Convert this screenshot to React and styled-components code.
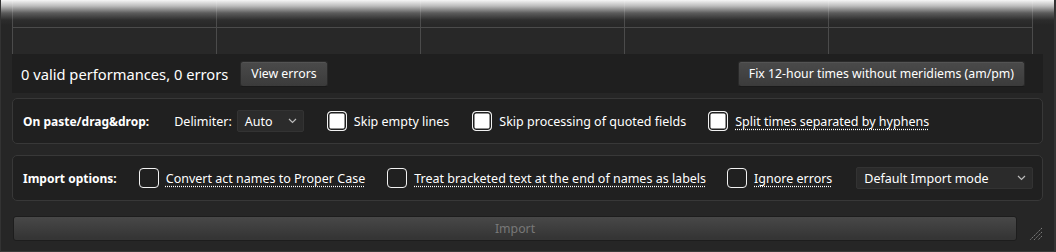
import React from "react";
import styled, { createGlobalStyle } from "styled-components";

const GlobalStyle = createGlobalStyle`
  html, body {
    margin: 0;
    padding: 0;
    background: #262626;
  }
  body {
    font-family: "Noto Sans", "Open Sans", sans-serif;
    color: #fff;
  }
`;

const Window = styled.div`
  position: relative;
  box-sizing: border-box;
  width: 1056px;
  height: 252px;
  padding: 0 11px 0 11px;
  background: #262626;
  border-left: 1px solid #333;
  border-right: 2px solid #333;
  border-bottom: 1px solid #3a3a3a;
  display: flex;
  flex-direction: column;
  overflow: hidden;

  /* the white fade that sits over the top of the grid */
  &::before {
    content: "";
    position: absolute;
    top: 0;
    left: 0;
    right: 0;
    height: 26px;
    pointer-events: none;
    background: linear-gradient(
      to bottom,
      rgba(250, 250, 250, 0.98) 0px,
      rgba(225, 225, 225, 0.8) 6px,
      rgba(170, 170, 170, 0.4) 13px,
      rgba(90, 90, 90, 0.12) 20px,
      rgba(0, 0, 0, 0) 25px
    );
  }
`;

const Grid = styled.div`
  display: grid;
  grid-template-columns: repeat(5, 1fr);
  grid-template-rows: 28px 26px;
  width: 1020px;
  border-left: 1px solid #4b4b4b;
  background: #282828;
`;

const Cell = styled.div`
  border-right: 1px solid #4b4b4b;
  border-bottom: ${(p) => (p.$head ? "1px solid #4b4b4b" : "none")};
`;

const StatusBar = styled.div`
  display: flex;
  align-items: center;
  height: 39px;
  padding: 0 18px 0 9px;
  background: #1f1f1f;
`;

const StatusText = styled.span`
  font-size: 14.7px;
  color: #fff;
  margin-right: 12px;
  white-space: nowrap;
`;

const Button = styled.button`
  height: 26px;
  padding: 0 10px;
  font-family: "Noto Sans", "Open Sans", sans-serif;
  font-size: 12.3px;
  color: #fff;
  white-space: nowrap;
  background: linear-gradient(to bottom, #4a4a4a, #3b3b3b);
  border: 1px solid #2a2a2a;
  border-bottom-color: #1a1a1a;
  border-radius: 3px;
  box-shadow: inset 0 1px 0 rgba(255, 255, 255, 0.06);
  margin-left: ${(p) => (p.$push ? "auto" : "0")};
`;

const Panel = styled.div`
  display: flex;
  align-items: center;
  height: 44px;
  margin-top: ${(p) => p.$gap}px;
  padding: 0 10px;
  background: #202020;
  border: 1px solid #383838;
  border-radius: 5px;
  white-space: nowrap;
`;

const PanelTitle = styled.span`
  font-size: 12px;
  font-weight: 700;
  margin-right: ${(p) => p.$space}px;
`;

const FieldLabel = styled.span`
  font-size: 12.5px;
  margin-right: 5px;
`;

const Dropdown = styled.div`
  display: flex;
  align-items: center;
  justify-content: space-between;
  flex-shrink: 0;
  box-sizing: border-box;
  width: ${(p) => p.$width}px;
  height: 22px;
  padding: 0 6px 0 7px;
  font-size: 12.5px;
  background: #2b2b2b;
  border: 1px solid #333;
  border-radius: 2px;
  margin-left: ${(p) => p.$left || 0}px;
`;

const Option = styled.label`
  display: flex;
  align-items: center;
  flex-shrink: 0;
  gap: 7px;
  font-size: 12.5px;
  margin-left: ${(p) => p.$left}px;
`;

const Box = styled.span`
  box-sizing: border-box;
  width: 20px;
  height: 20px;
  border: 1.5px solid #f2f2f2;
  border-radius: 4px;
  background: ${(p) => (p.$filled ? "#fff" : "transparent")};
  box-shadow: ${(p) => (p.$filled ? "inset 0 0 0 1.5px #202020" : "none")};
`;

const OptionText = styled.span`
  text-decoration: ${(p) => (p.$hint ? "underline dotted" : "none")};
  text-underline-offset: 3px;
`;

const Footer = styled.div`
  display: flex;
  align-items: flex-start;
  margin-top: 15px;
`;

const ImportButton = styled.button`
  width: 1008px;
  height: 25px;
  margin-left: 1px;
  font-family: "Noto Sans", "Open Sans", sans-serif;
  font-size: 12.3px;
  color: #787878;
  background: linear-gradient(to bottom, #484848, #353535 90%);
  border: 1px solid #1d1d1d;
  border-radius: 3px;
`;

const Grip = styled.svg`
  margin: 9px 0 0 10px;
`;

const Chevron = () => (
  <svg width="9" height="6" viewBox="0 0 9 6">
    <polyline points="1,1 4.5,4.5 8,1" fill="none" stroke="#bbb" strokeWidth="1.2" />
  </svg>
);

export default function App() {
  return (
    <>
      <GlobalStyle />
      <Window>
        <Grid>
          {[0, 1, 2, 3, 4].map((i) => (
            <Cell key={"h" + i} $head />
          ))}
          {[0, 1, 2, 3, 4].map((i) => (
            <Cell key={"r" + i} />
          ))}
        </Grid>

        <StatusBar>
          <StatusText>0 valid performances, 0 errors</StatusText>
          <Button>View errors</Button>
          <Button $push>Fix 12-hour times without meridiems (am/pm)</Button>
        </StatusBar>

        <Panel $gap={5}>
          <PanelTitle $space={25}>On paste/drag&amp;drop:</PanelTitle>
          <FieldLabel>Delimiter:</FieldLabel>
          <Dropdown $width={67}>
            Auto
            <Chevron />
          </Dropdown>
          <Option $left={23}>
            <Box $filled />
            <OptionText>Skip empty lines</OptionText>
          </Option>
          <Option $left={23}>
            <Box $filled />
            <OptionText>Skip processing of quoted fields</OptionText>
          </Option>
          <Option $left={22}>
            <Box $filled />
            <OptionText $hint>Split times separated by hyphens</OptionText>
          </Option>
        </Panel>

        <Panel $gap={11}>
          <PanelTitle $space={22}>Import options:</PanelTitle>
          <Option $left={0}>
            <Box />
            <OptionText $hint>Convert act names to Proper Case</OptionText>
          </Option>
          <Option $left={22}>
            <Box />
            <OptionText $hint>Treat bracketed text at the end of names as labels</OptionText>
          </Option>
          <Option $left={21}>
            <Box />
            <OptionText $hint>Ignore errors</OptionText>
          </Option>
          <Dropdown $width={177} $left={24}>
            Default Import mode
            <Chevron />
          </Dropdown>
        </Panel>

        <Footer>
          <ImportButton>Import</ImportButton>
          <Grip width="16" height="16" viewBox="0 0 16 16">
            <g stroke="#8a8a8a" strokeWidth="1" strokeDasharray="1.5 1">
              <line x1="15" y1="3" x2="3" y2="15" />
              <line x1="15" y1="7" x2="7" y2="15" />
              <line x1="15" y1="11" x2="11" y2="15" />
            </g>
          </Grip>
        </Footer>
      </Window>
    </>
  );
}
